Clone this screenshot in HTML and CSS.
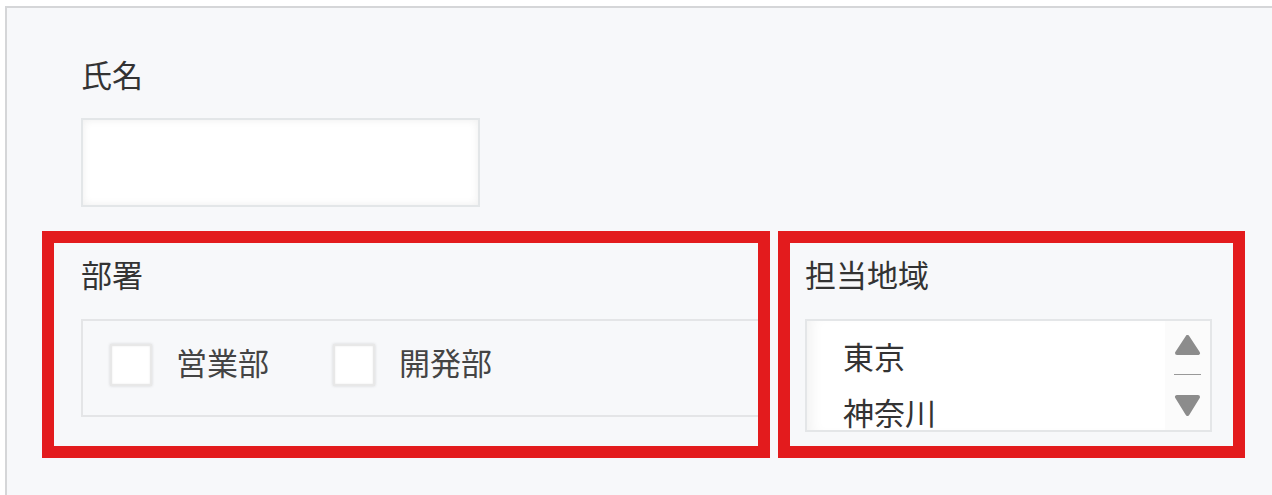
FILE: index.html
```html
<!DOCTYPE html>
<html lang="ja">
<head>
    <meta charset="utf-8" />
    <title>登録フォーム</title>
    <link rel="stylesheet" href="styles.css">
</head>
<body>
    <div class="form">
        <div class="name-field">
            <label class="label" for="name">氏名</label>
            <input type="text" id="name" class="text-input">
        </div>

        <div class="row">
            <div class="boxed dept">
                <span class="label">部署</span>
                <div class="checks">
                    <label class="check"><input type="checkbox" name="dept" value="sales"><span>営業部</span></label>
                    <label class="check"><input type="checkbox" name="dept" value="dev"><span>開発部</span></label>
                </div>
            </div>

            <div class="boxed area">
                <span class="label">担当地域</span>
                <div class="listbox">
                    <ul class="options">
                        <li>東京</li>
                        <li>神奈川</li>
                    </ul>
                    <div class="scroll">
                        <svg class="arrow" width="27" height="20" viewBox="0 0 27 20"><polygon points="3,18 13.5,2 24,18" /></svg>
                        <span class="divider"></span>
                        <svg class="arrow" width="27" height="21" viewBox="0 0 27 21"><polygon points="3,2 24,2 13.5,19" /></svg>
                    </div>
                </div>
            </div>
        </div>
    </div>
</body>
</html>
```

FILE: styles.css
```css
body{
    margin: 0;
    background: #fff;
    overflow: hidden;
    font-family: "Noto Sans CJK JP", "Noto Sans", sans-serif;
    color: #333;
}

.form{
    box-sizing: border-box;
    margin: 6px 0 0 5px;
    width: 1320px;
    height: calc(100vh - 6px);
    border-top: 2px solid #d5d6d8;
    border-left: 2px solid #d5d6d8;
    background: #f7f8fa;
}

.label{
    display: block;
    font-size: 31px;
    line-height: 44px;
}

.name-field{
    padding: 44px 0 0 74px;
}

.text-input{
    display: block;
    box-sizing: border-box;
    width: 399px;
    height: 89px;
    margin: 22px 0 0 0;
    border: 2px solid #e3e6e8;
    background: #fff;
    box-shadow: inset 0 0 9px rgba(0, 0, 0, 0.07);
    outline: none;
}

.row{
    display: flex;
    gap: 8px;
    margin: 24px 0 0 35px;
}

.boxed{
    box-sizing: border-box;
    height: 227px;
    border: 12px solid #e31b1d;
}

.dept{
    width: 728px;
    padding: 9px 0 0 27px;
}

.area{
    width: 467px;
    padding: 9px 0 0 15px;
}

.checks{
    display: flex;
    align-items: center;
    gap: 64px;
    box-sizing: border-box;
    height: 98px;
    margin-top: 23px;
    padding: 0 0 7px 27px;
    border: 2px solid #e4e5e7;
    border-right: none;
}

.check{
    display: flex;
    align-items: center;
    gap: 24px;
    font-size: 31px;
    line-height: 44px;
    color: #444;
}

.check span{
    margin-bottom: 5px;
}

.check input{
    appearance: none;
    margin: 0;
    width: 42px;
    height: 42px;
    border: 2px solid #e8e8e8;
    background: #fff;
    box-shadow: 0 0 3px rgba(0, 0, 0, 0.14), inset 0 0 2px rgba(0, 0, 0, 0.1);
}

.listbox{
    display: flex;
    box-sizing: border-box;
    width: 407px;
    height: 113px;
    margin-top: 23px;
    border: 2px solid #e4e6e8;
    background: #fff;
    box-shadow: inset 12px 0 14px -8px rgba(0, 0, 0, 0.06);
    overflow: hidden;
}

.options{
    flex: 1;
    margin: 0;
    padding: 7px 0 0 36px;
    list-style: none;
    font-size: 31px;
    line-height: 56px;
}

.options li{
    height: 56px;
}

.scroll{
    display: flex;
    flex-direction: column;
    align-items: center;
    width: 45px;
    background: #fbfbfb;
    padding-top: 14px;
}

.arrow polygon{
    fill: #8c8c8c;
    stroke: #8c8c8c;
    stroke-width: 4;
    stroke-linejoin: round;
}

.divider{
    display: block;
    width: 27px;
    height: 1px;
    margin: 19px 0 20px;
    background: #999;
}
```
